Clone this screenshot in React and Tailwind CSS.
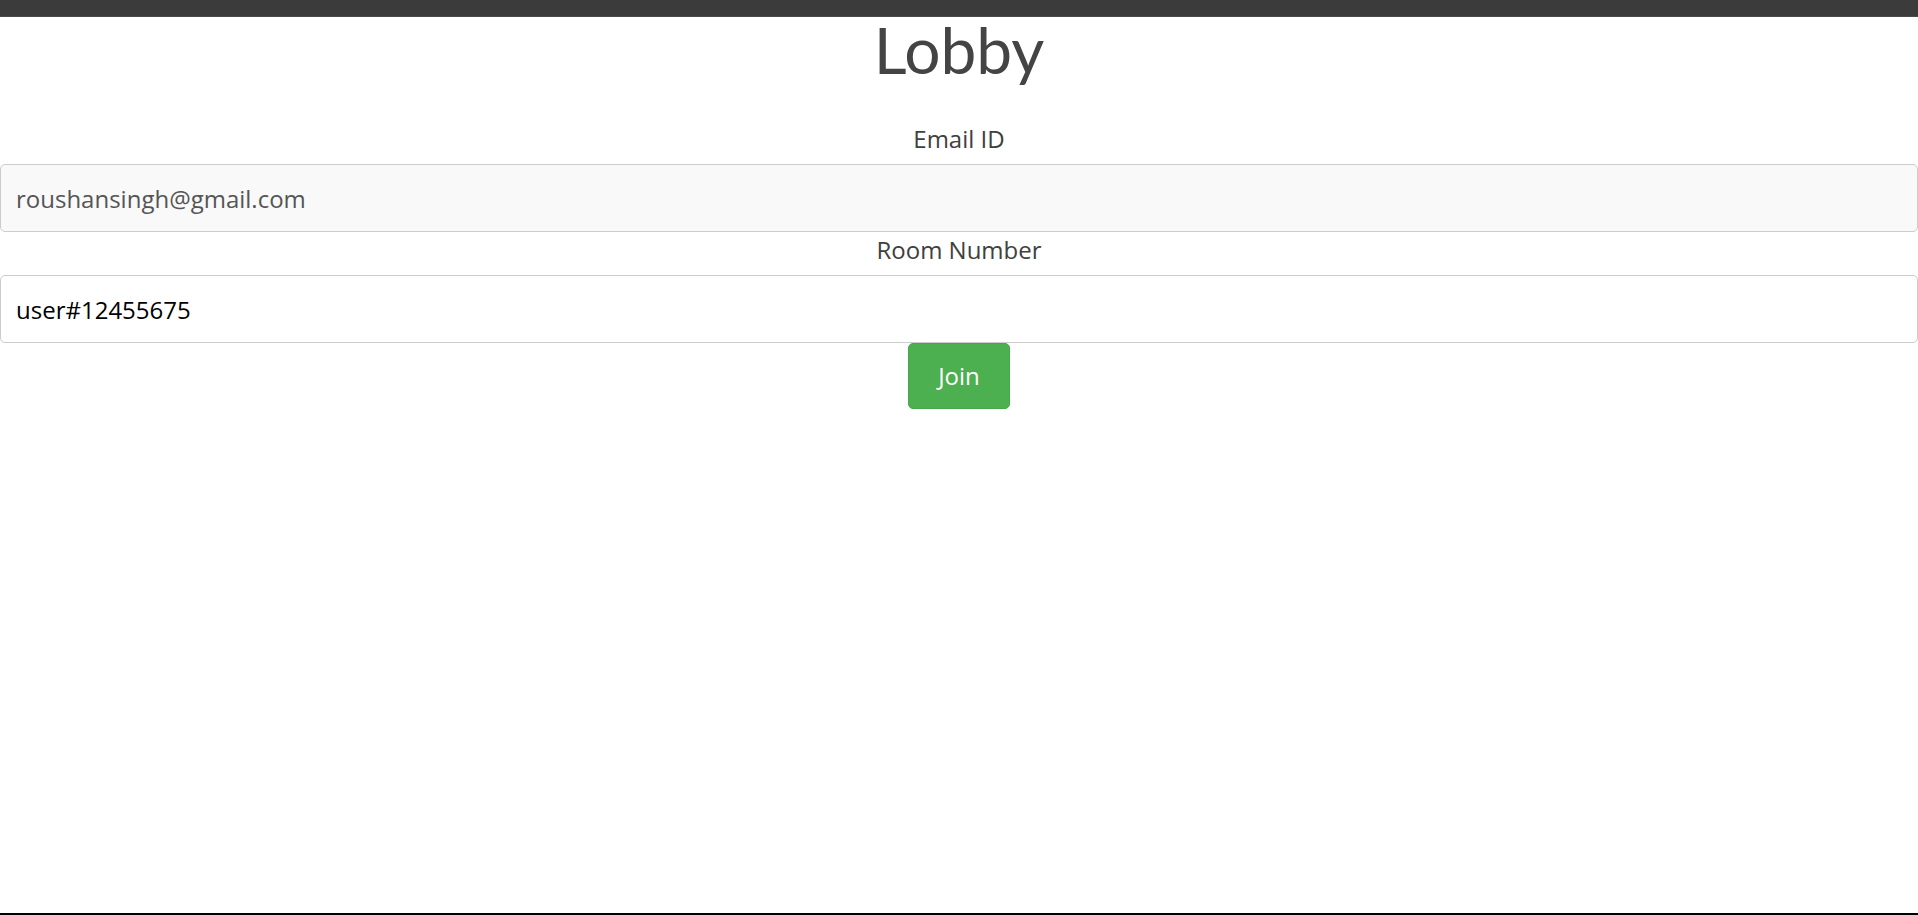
import React from "react";

export default function App() {
  return (
    <div
      className="h-[915px] w-full bg-white border-b-2 border-black flex flex-col overflow-hidden"
      style={{ fontFamily: '"Open Sans", "Noto Sans", sans-serif' }}
    >
      <div className="h-[17px] bg-[#3b3b3b] border-b border-[#4a4a4a] shrink-0" />
      <h1
        className="text-center text-[64px] leading-[66px] text-[#444444] font-normal"
        style={{ fontFamily: 'Lato, "Open Sans", sans-serif' }}
      >
        Lobby
      </h1>
      <form className="mt-[38px] flex flex-col" onSubmit={(e) => e.preventDefault()}>
        <label className="block text-center text-[24px] leading-[31px] pt-[2px] pb-[10px] text-[#404040]">
          Email ID
        </label>
        <input
          className="h-[68px] w-full rounded-[5px] border border-[#cccccc] bg-[#f9f9f9] px-[15px] text-[24px] text-[#555555] outline-none"
          defaultValue="roushansingh@gmail.com"
          readOnly
        />
        <label className="block text-center text-[24px] leading-[31px] pt-[2px] pb-[10px] text-[#404040]">
          Room Number
        </label>
        <input
          className="h-[68px] w-full rounded-[5px] border border-[#cccccc] bg-white px-[15px] text-[24px] text-black outline-none"
          defaultValue="user#12455675"
          readOnly
        />
        <div className="flex justify-center">
          <button
            type="submit"
            className="h-[66px] w-[102px] rounded-[5px] bg-[#4caf50] border border-[#47a84b] text-white text-[24px]"
          >
            Join
          </button>
        </div>
      </form>
    </div>
  );
}
